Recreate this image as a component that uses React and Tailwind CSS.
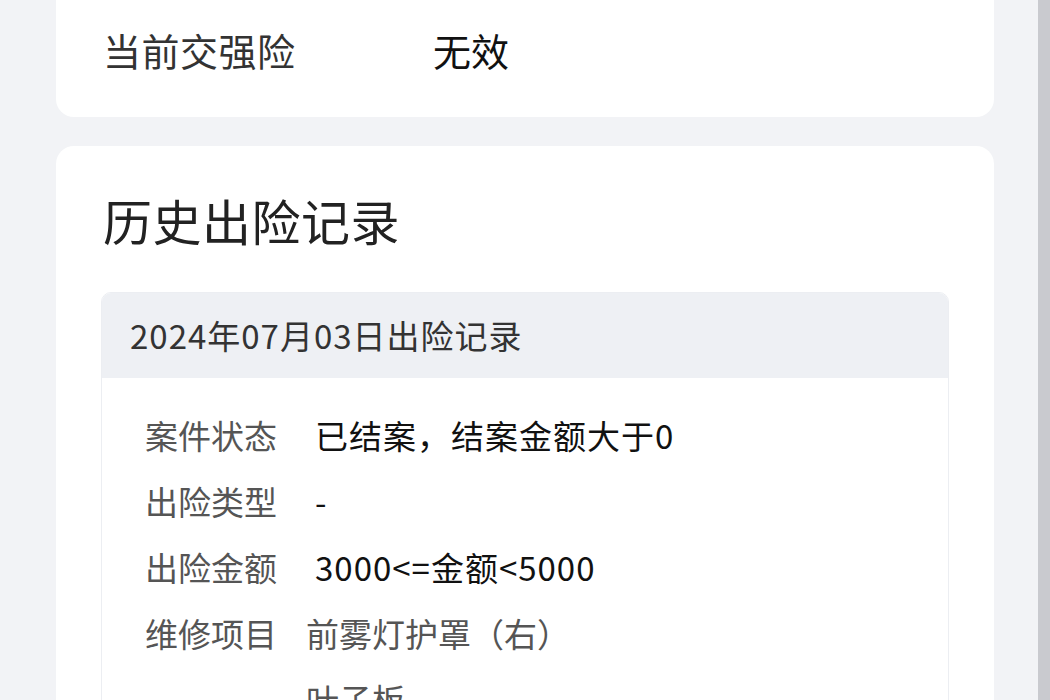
const rows = [
  { label: '案件状态', value: '已结案，结案金额大于0' },
  { label: '出险类型', value: '-' },
  { label: '出险金额', value: '3000<=金额<5000' },
];

const repairs = ['前雾灯护罩（右）', '叶子板', '后保险杠'];

export default function App() {
  return (
    <div
      className="flex h-[700px] w-[1050px] overflow-hidden bg-[#f2f3f6]"
      style={{ fontFamily: '"Noto Sans CJK SC", "Noto Sans", sans-serif' }}
    >
      <div className="flex-1 pl-[56px] pr-[44px]">
        {/* current insurance card */}
        <div className="-mt-[20px] flex h-[137px] w-[938px] items-center rounded-[18px] bg-white pl-[47px] pr-8 pt-[2px]">
          <span className="w-[330px] text-[38px] leading-none tracking-[0.5px] text-[#333]">当前交强险</span>
          <span className="text-[38px] leading-none text-[#111]">无效</span>
        </div>

        {/* history card */}
        <div className="mt-[29px] h-[600px] w-[938px] rounded-[18px] bg-white px-[45px] pt-[50px]">
          <h2 className="pl-[2px] text-[49px] font-normal leading-[48px] tracking-[0.5px] text-[#222]">历史出险记录</h2>

          <div className="mt-[48px] overflow-hidden rounded-[10px] border border-[#eceef2]">
            <div className="flex h-[85px] items-center bg-[#eef0f4] pl-[28px] text-[33px] tracking-[1px] text-[#333]">
              2024年07月03日出险记录
            </div>
            <div className="pt-[24px] pl-[43px]">
              {rows.map((r) => (
                <div key={r.label} className="flex h-[66px] items-center text-[33px] leading-none">
                  <span className="w-[170px] text-[#555]">{r.label}</span>
                  <span className="tracking-[1px] text-[#111]">{r.value}</span>
                </div>
              ))}
              <div className="flex text-[33px] leading-none">
                <span className="flex h-[66px] w-[161px] items-center text-[#555]">维修项目</span>
                <div className="flex flex-col">
                  {repairs.map((item) => (
                    <span key={item} className="flex h-[66px] items-center text-[#555]">
                      {item}
                    </span>
                  ))}
                </div>
              </div>
            </div>
          </div>
        </div>
      </div>
      <div className="w-[12px] bg-[#c9cacf]" />
    </div>
  );
}
